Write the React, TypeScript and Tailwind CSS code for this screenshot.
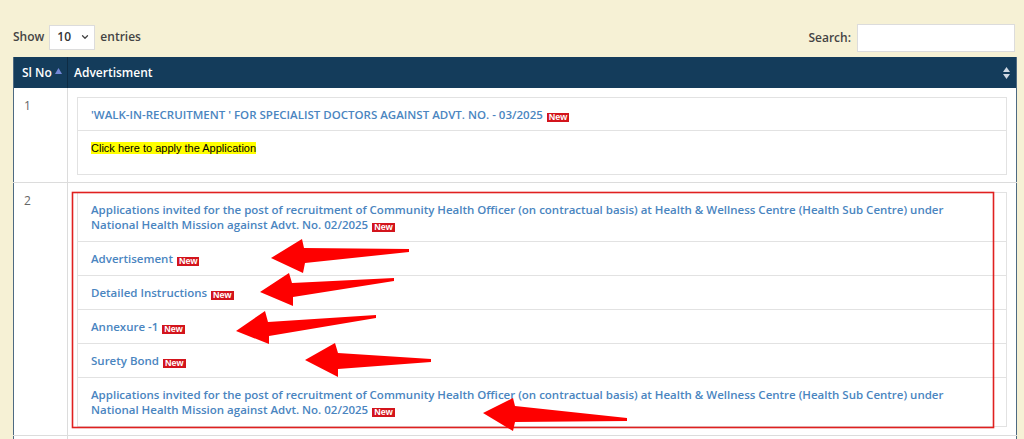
import React from 'react';
import { ChevronDown } from 'lucide-react';

const NewBadge: React.FC = () => (
  <span className="ml-[4px] inline-block bg-[#d3141c] px-[2px] align-[-1px] font-['Liberation_Sans',Arial,sans-serif] text-[9px] font-bold leading-[9px] text-white">
    New
  </span>
);

const LinkRow: React.FC<{ children: React.ReactNode; last?: boolean }> = ({ children, last }) => (
  <div className={`px-[13px] py-[9px] leading-[15px] ${last ? '' : 'border-b border-[#e2e2e2]'}`}>
    <a className="text-[11.5px] font-semibold text-[#4a85bf]">{children}</a>
  </div>
);

const longTitle =
  'Applications invited for the post of recruitment of Community Health Officer (on contractual basis) at Health & Wellness Centre (Health Sub Centre) under National Health Mission against Advt. No. 02/2025';

// red annotation arrows laid over the screenshot
const arrows = [
  '271,258 302,239 304,248 409,249 409,252 305,263 303,273',
  '260,292 289,273 292,283 394,278 394,281 293,297 293,306',
  '236,331 265,311 268,322 376,315 376,318 269,336 269,344',
  '305,360 335,343 338,353 431,359 431,362 338,369 338,377',
  '483,413 513,398 515,406 627,418 627,421 515,422 513,431',
];

const App: React.FC = () => {
  return (
    <div className="relative min-h-screen overflow-hidden bg-[#f6f1d5] pl-[13px] pr-[7px] pt-[24px] font-['Open_Sans',sans-serif]">
      {/* Top controls */}
      <div className="flex h-[28px] items-start justify-between pr-[2px] text-[12px] font-semibold text-[#444]">
        <div className="flex h-[26px] items-center">
          <span>Show</span>
          <div className="mx-[5px] flex h-[25px] w-[46px] items-center justify-between border border-[#dcdcdc] bg-white pl-[7px] pr-[4px] text-[#333]">
            <span>10</span>
            <ChevronDown size={10} strokeWidth={3} className="text-[#444]" />
          </div>
          <span>entries</span>
        </div>
        <div className="flex h-[28px] items-center gap-[6px]">
          <span>Search:</span>
          <input className="h-[28px] w-[158px] border border-[#dcdcdc] bg-white outline-none" />
        </div>
      </div>

      {/* Table */}
      <table className="mt-[5px] w-[1004px] table-fixed border-collapse border-x border-[#4e6a82] bg-white">
        <thead>
          <tr className="h-[31px] bg-[#143c5b] text-left text-[12px] font-semibold text-white">
            <th className="w-[54px] border-r border-[#0e2c44] pl-[8px] pr-[5px] font-semibold">
              <div className="flex items-center justify-between">
                <span>Sl No</span>
                <svg width="7" height="6" viewBox="0 0 7 6" className="mb-[3px]">
                  <polygon points="3.5,0 7,6 0,6" fill="#7488d8" />
                </svg>
              </div>
            </th>
            <th className="pl-[6px] pr-[6px] font-semibold">
              <div className="flex items-center justify-between">
                <span>Advertisment</span>
                <svg width="7" height="12" viewBox="0 0 7 12">
                  <polygon points="3.5,0 7,5 0,5" fill="#cfd8e3" />
                  <polygon points="0,7 7,7 3.5,12" fill="#cfd8e3" />
                </svg>
              </div>
            </th>
          </tr>
        </thead>
        <tbody className="text-[12px] leading-[15px]">
          <tr className="border-b border-[#dcdcdc] align-top">
            <td className="border-r border-[#dcdcdc] pl-[10px] pt-[10px] text-[#666]">1</td>
            <td className="px-[9px] pb-[7px] pt-[9px]">
              <div className="border border-[#e2e2e2]">
                <div className="border-b border-[#e2e2e2] px-[13px] pb-[8px] pt-[9px] leading-[15px]">
                  <a className="text-[11.5px] font-semibold text-[#4a85bf]">
                    'WALK-IN-RECRUITMENT ' FOR SPECIALIST DOCTORS AGAINST ADVT. NO. - 03/2025
                  </a>
                  <NewBadge />
                </div>
                <div className="h-[43px] px-[13px] pt-[9px] leading-[15px]">
                  <span className="bg-[#ffff00] font-['Liberation_Sans',Arial,sans-serif] text-[11px] text-black">
                    Click here to apply the Application
                  </span>
                </div>
              </div>
            </td>
          </tr>
          <tr className="border-b border-[#dcdcdc] align-top">
            <td className="border-r border-[#dcdcdc] pl-[10px] pt-[10px] text-[#666]">2</td>
            <td className="px-[9px] pb-[8px] pt-[9px]">
              <div className="border border-[#e2e2e2]">
                <LinkRow>
                  {longTitle}
                  <NewBadge />
                </LinkRow>
                <LinkRow>
                  Advertisement
                  <NewBadge />
                </LinkRow>
                <LinkRow>
                  Detailed Instructions
                  <NewBadge />
                </LinkRow>
                <LinkRow>
                  Annexure -1
                  <NewBadge />
                </LinkRow>
                <LinkRow>
                  Surety Bond
                  <NewBadge />
                </LinkRow>
                <LinkRow last>
                  {longTitle}
                  <NewBadge />
                </LinkRow>
              </div>
            </td>
          </tr>
          {/* next row, only its top edge is in view */}
          <tr className="h-[40px] align-top">
            <td className="border-r border-[#dcdcdc]" />
            <td />
          </tr>
        </tbody>
      </table>

      {/* Annotation overlay */}
      <svg className="pointer-events-none absolute left-0 top-0" width="1024" height="439" viewBox="0 0 1024 439">
        <rect x="72.5" y="192.5" width="921" height="235" fill="none" stroke="#e0201f" strokeWidth="1.6" />
        {arrows.map((p, i) => (
          <polygon key={i} points={p} fill="#fe0000" />
        ))}
      </svg>
    </div>
  );
};

export default App;
